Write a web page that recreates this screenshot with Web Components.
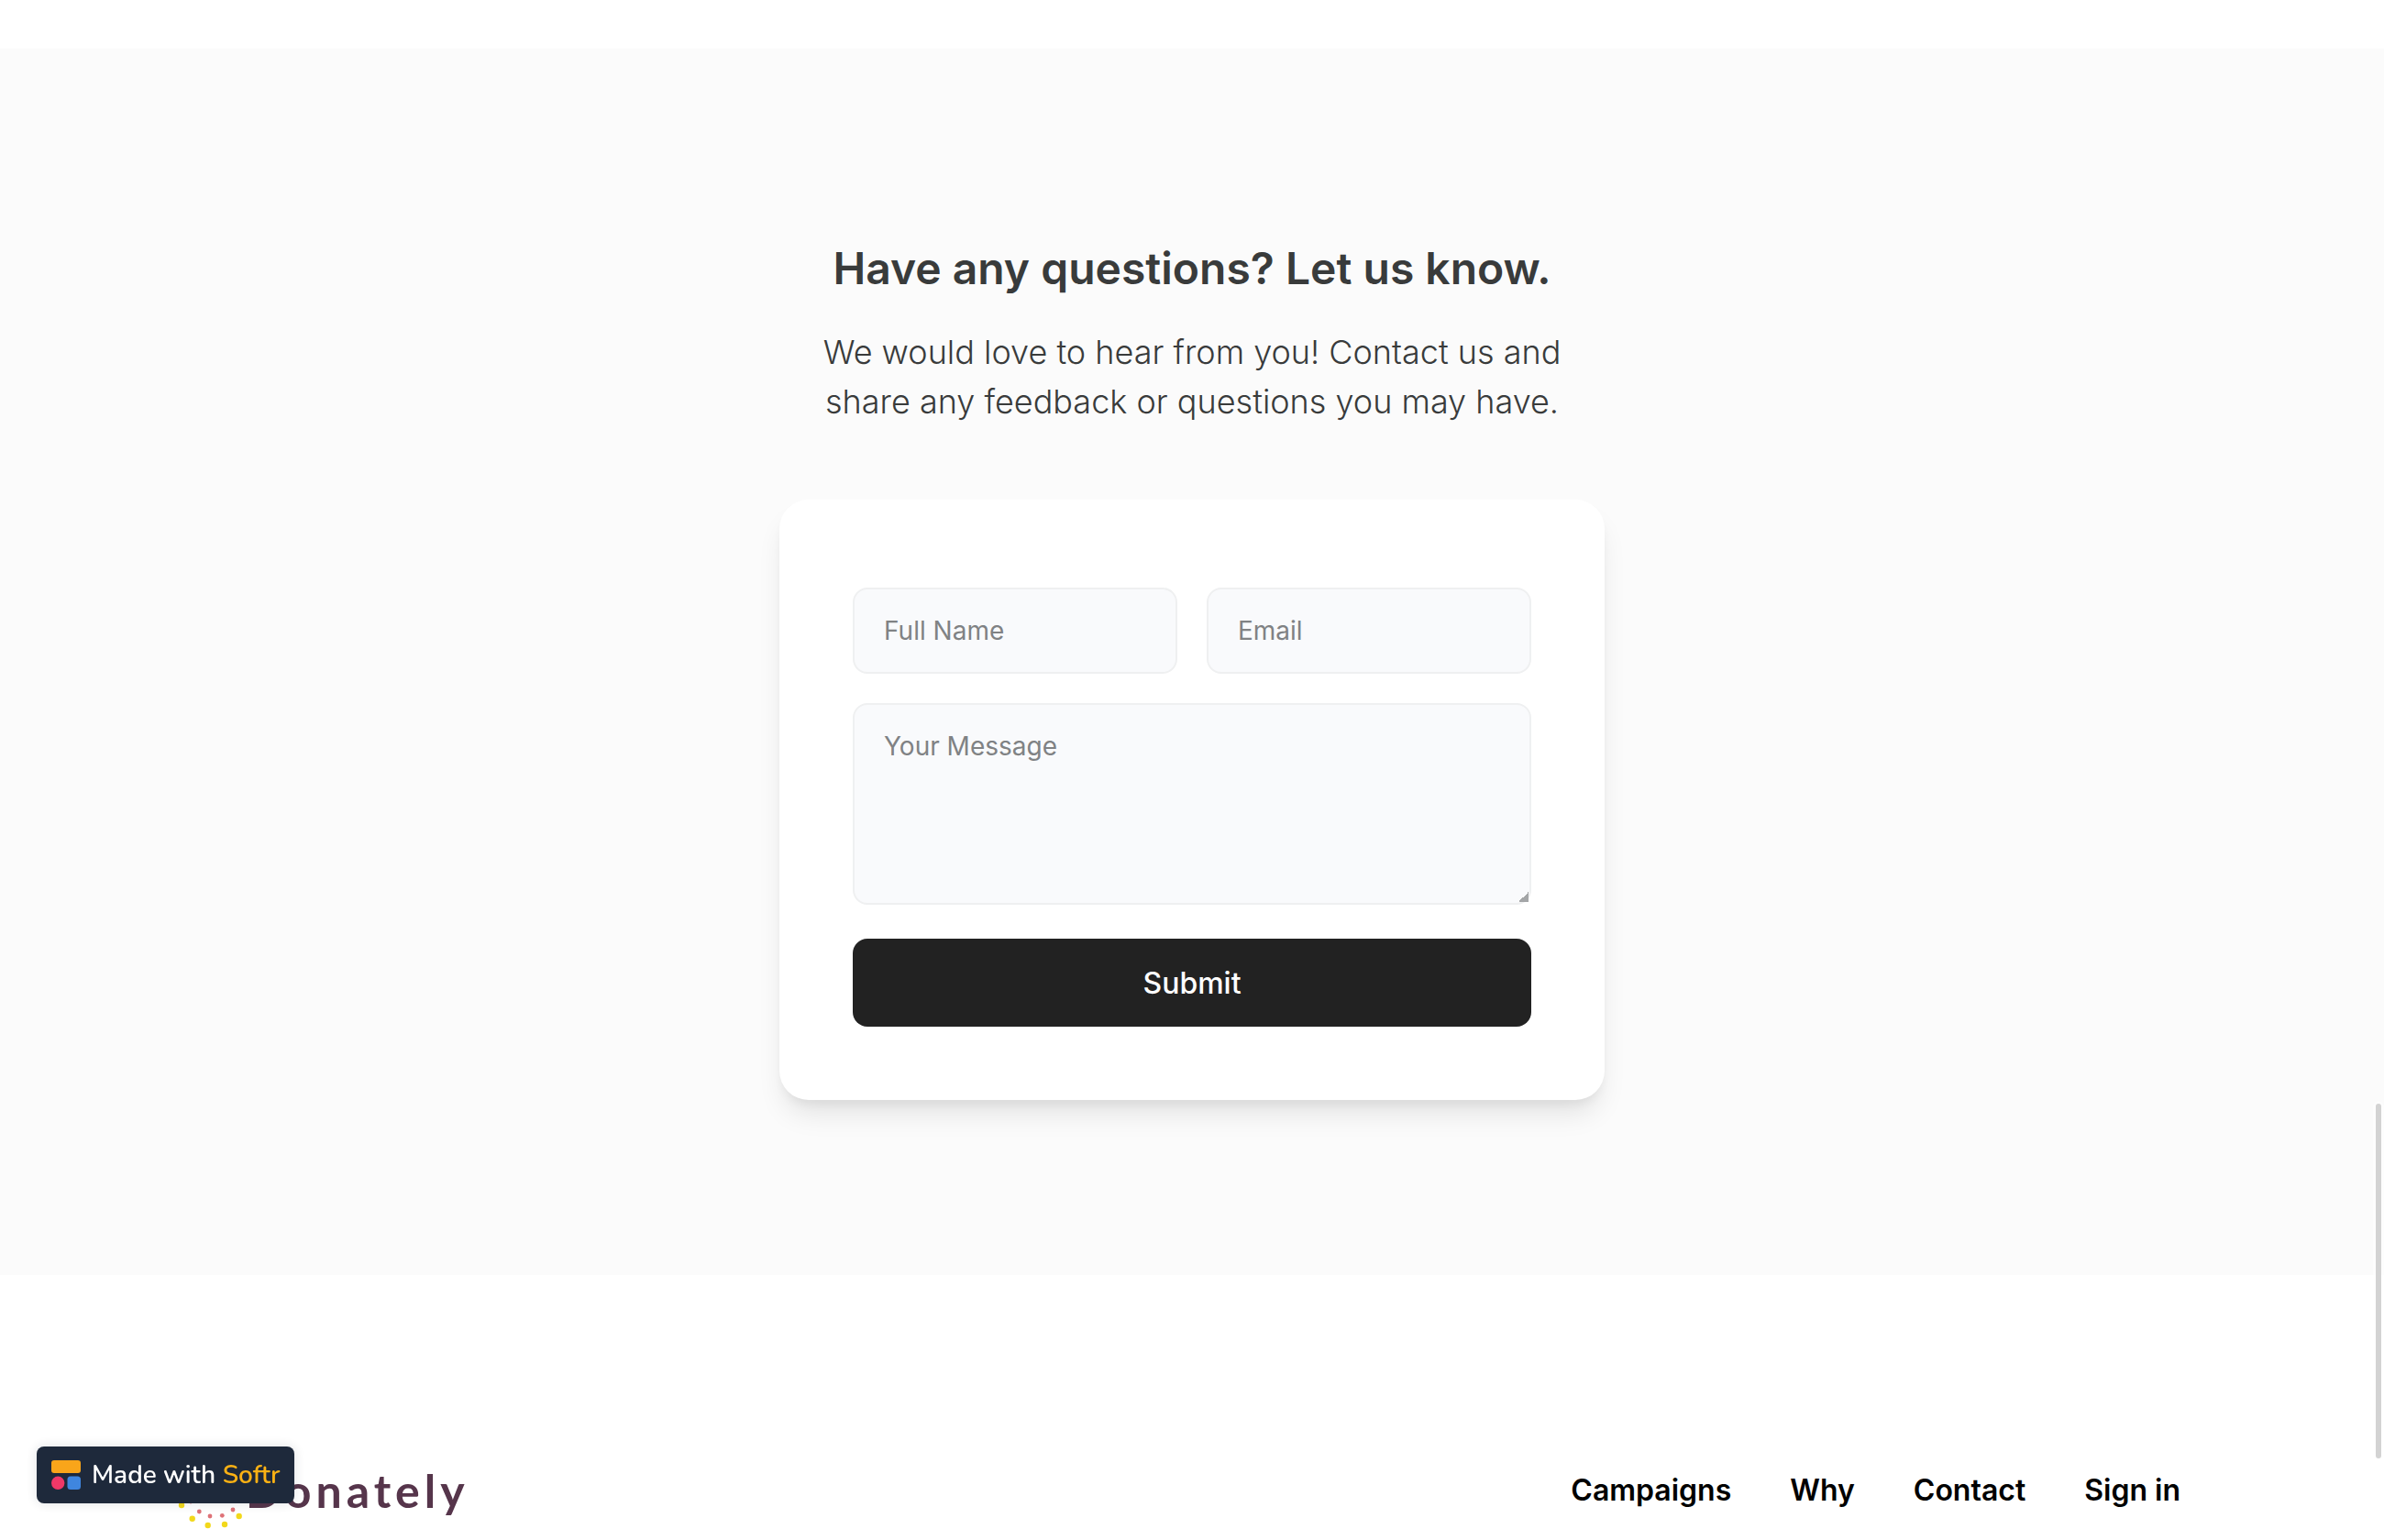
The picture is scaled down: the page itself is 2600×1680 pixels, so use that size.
<!DOCTYPE html>
<html lang="en">
<head>
<meta charset="utf-8">
<title>Donately</title>
<style>
  html, body { margin: 0; height: 100%; }
  body { background: #fff; font-family: Inter, "Liberation Sans", sans-serif; color: #393b3b; overflow: hidden; }
</style>
</head>
<body>
<donate-page>
  <contact-section>
    <span slot="title">Have any questions? Let us know.</span>
    <span slot="subtitle">We would love to hear from you! Contact us and share any feedback or questions you may have.</span>
    <contact-form></contact-form>
  </contact-section>
  <site-footer>
    <brand-logo slot="brand">Donately</brand-logo>
    <nav-link href="#campaigns">Campaigns</nav-link>
    <nav-link href="#why">Why</nav-link>
    <nav-link href="#contact">Contact</nav-link>
    <nav-link href="#signin">Sign in</nav-link>
  </site-footer>
</donate-page>
<made-with-badge></made-with-badge>
<scroll-thumb></scroll-thumb>

<script>
const define = (name, html, setup) => customElements.define(name, class extends HTMLElement {
  constructor() {
    super();
    this.attachShadow({ mode: "open" }).innerHTML = html;
  }
  connectedCallback() { if (setup) setup(this, this.shadowRoot); }
});

define("donate-page", `
<style>
  :host { display: flex; flex-direction: column; min-height: 100%; padding-top: 53px; box-sizing: border-box; }
</style>
<slot></slot>`);

define("contact-section", `
<style>
  :host { display: block; background: #fbfbfb; }
  section { display: flex; flex-direction: column; align-items: center; padding: 204px 48px 191px; }
  h2 { margin: 0; font-size: 48px; line-height: 72px; font-weight: 600; text-align: center; }
  p { margin: 28px 0 0; max-width: 840px; font-size: 36px; line-height: 54px; font-weight: 300; text-align: center; }
  ::slotted(contact-form) { width: 100%; max-width: 900px; margin-top: 80px; }
</style>
<section>
  <h2><slot name="title"></slot></h2>
  <p><slot name="subtitle"></slot></p>
  <slot></slot>
</section>`);

define("contact-form", `
<style>
  :host { display: block; box-sizing: border-box; padding: 96px 80px 80px; border-radius: 32px; background: #fff;
    box-shadow: 0 20px 30px -6px rgba(0,0,0,.10), 0 8px 12px -4px rgba(0,0,0,.06); }
  form { display: flex; flex-direction: column; gap: 32px; }
  .row { display: flex; gap: 32px; }
  input, textarea { box-sizing: border-box; margin: 0; padding: 24px 32px; border: 2px solid #eff0f1; border-radius: 16px;
    background: #f9fafc; font: 400 28px/42px Inter, "Liberation Sans", sans-serif; color: #222; outline: none; }
  input { flex: 1; min-width: 0; height: 94px; }
  textarea { display: block; width: 100%; height: 220px; resize: vertical; }
  textarea::-webkit-resizer { background: linear-gradient(135deg, transparent 50%, #a4a6a8 50%) no-repeat right 1px bottom 1px / 11px 11px; }
  ::placeholder { color: #808284; opacity: 1; }
  button { margin: 5px 0 0; padding: 2px 0 0; height: 96px; border: 0; border-radius: 16px; background: #222; color: #fff;
    font: 500 32px/48px Inter, "Liberation Sans", sans-serif; }
</style>
<form>
  <div class="row">
    <input type="text" name="name" placeholder="Full Name" aria-label="Full Name">
    <input type="email" name="email" placeholder="Email" aria-label="Email">
  </div>
  <textarea name="message" placeholder="Your Message" aria-label="Your Message"></textarea>
  <button type="button">Submit</button>
</form>`);

define("site-footer", `
<style>
  :host { display: block; background: #fff; }
  footer { display: flex; align-items: center; justify-content: space-between; padding: 193px 222px 0 192px; }
  nav { display: flex; gap: 64px; }
</style>
<footer>
  <slot name="brand"></slot>
  <nav><slot></slot></nav>
</footer>`);

define("nav-link", `
<style>
  :host { display: block; }
  a { color: #000; text-decoration: none; font-size: 32px; line-height: 48px; font-weight: 600; }
</style>
<a><slot></slot></a>`, (host, root) => { root.querySelector("a").href = host.getAttribute("href"); });

define("brand-logo", `
<style>
  :host { display: block; }
  a { display: flex; align-items: center; color: #56354b; text-decoration: none;
    font: 700 50px/84px Lato, "Liberation Sans", sans-serif; letter-spacing: 5px; }
  svg { display: block; width: 76px; height: 84px; }
</style>
<a href="#home">
  <svg viewBox="192 1583 76 84" aria-hidden="true">
    <g fill="#f2d81b">
      <circle cx="198" cy="1641" r="3.2"/><circle cx="209.7" cy="1655.8" r="3.2"/><circle cx="226.7" cy="1663" r="3.2"/>
      <circle cx="245" cy="1662" r="3.2"/><circle cx="260.7" cy="1653" r="3.2"/>
      <circle cx="196" cy="1624" r="3.2"/><circle cx="202" cy="1606" r="3.2"/><circle cx="216" cy="1594" r="3.2"/>
      <circle cx="233" cy="1590" r="3.2"/><circle cx="251" cy="1594" r="3.2"/><circle cx="264" cy="1606" r="3.2"/>
    </g>
    <g fill="#de7277">
      <circle cx="217.3" cy="1648" r="2.4"/><circle cx="229" cy="1653" r="2.4"/><circle cx="242.3" cy="1652.3" r="2.4"/>
      <circle cx="254" cy="1646" r="2.4"/><circle cx="208" cy="1637" r="2.4"/><circle cx="207" cy="1620" r="2.4"/>
      <circle cx="218" cy="1606" r="2.4"/><circle cx="234" cy="1601" r="2.4"/><circle cx="250" cy="1607" r="2.4"/>
    </g>
  </svg>
  <slot></slot>
</a>`);

define("made-with-badge", `
<style>
  :host { position: fixed; left: 40px; bottom: 40px; display: block; }
  a { display: flex; align-items: center; gap: 12px; box-sizing: border-box; height: 62px; padding: 0 16px; border-radius: 8px;
    background: #1e293b; color: #fff; text-decoration: none; box-shadow: 0 0 12px rgba(30,41,59,.14);
    font: 600 28px/40px Nunito, Lato, "Liberation Sans", sans-serif; white-space: nowrap; }
  b { font-weight: 600; color: #fbb114; }
  svg { display: block; width: 32px; height: 32px; }
</style>
<a href="#softr">
  <svg viewBox="0 0 32 32" aria-hidden="true">
    <rect width="32" height="14" rx="3" fill="#f9a51a"/>
    <circle cx="7.2" cy="24.8" r="7.2" fill="#ef3868"/>
    <rect x="17.5" y="17.6" width="14.5" height="14.4" rx="3.5" fill="#3f86df"/>
  </svg>
  <span>Made with <b>Softr</b></span>
</a>`);

define("scroll-thumb", `
<style>
  :host { position: fixed; right: 3px; bottom: 89px; display: block; width: 6px; height: 387px; border-radius: 3px; background: #d3d3d3; box-shadow: 0 0 0 3px rgba(255,255,255,.5); }
</style>`);
</script>
</body>
</html>
